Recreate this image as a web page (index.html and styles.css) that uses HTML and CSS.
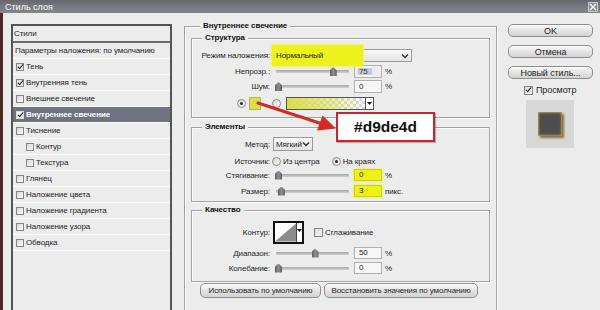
FILE: index.html
```html
<!DOCTYPE html>
<html lang="ru">
<head>
<meta charset="utf-8">
<title>Стиль слоя</title>
<link rel="stylesheet" href="styles.css">
</head>
<body>
<div class="dialog">
  <div class="titlebar">
    <span class="title">Стиль слоя</span>
    <span class="close"><svg width="8" height="8" viewBox="0 0 8 8"><path d="M1 1L7 7M7 1L1 7" stroke="#fff" stroke-width="1.3"/></svg></span>
  </div>
  <div class="content">
    <div class="styles-panel">
      <div class="sp-head">Стили</div>
      <div class="sp-row sp-blend">Параметры наложения: по умолчанию</div>
      <div class="sp-row"><span class="cb on"></span>Тень</div>
      <div class="sp-row"><span class="cb on"></span>Внутренняя тень</div>
      <div class="sp-row"><span class="cb"></span>Внешнее свечение</div>
      <div class="sp-row sel"><span class="cb on"></span>Внутреннее свечение</div>
      <div class="sp-row"><span class="cb"></span>Тиснение</div>
      <div class="sp-row sub"><span class="cb"></span>Контур</div>
      <div class="sp-row sub"><span class="cb"></span>Текстура</div>
      <div class="sp-row"><span class="cb"></span>Глянец</div>
      <div class="sp-row"><span class="cb"></span>Наложение цвета</div>
      <div class="sp-row"><span class="cb"></span>Наложение градиента</div>
      <div class="sp-row"><span class="cb"></span>Наложение узора</div>
      <div class="sp-row"><span class="cb"></span>Обводка</div>
    </div>

    <div class="main">
      <div class="group outer">
        <div class="gtitle outer-title"><span>Внутреннее свечение</span></div>

        <div class="group g-struct">
          <div class="gtitle"><span>Структура</span></div>
          <div class="row r-mode">
            <span class="lbl">Режим наложения:</span>
            <div class="select mode">
              <span class="mark-mode">Нормальный</span>
              <span class="chev"><svg width="8" height="6" viewBox="0 0 8 6"><path d="M1 1.5L4 4.5L7 1.5" fill="none" stroke="#333" stroke-width="1.5"/></svg></span>
            </div>
          </div>
          <div class="row r-13">
            <span class="lbl">Непрозр.:</span>
            <div class="slider"><span class="thumb" style="left:75%"></span></div>
            <span class="num sel-num">75</span><span class="unit">%</span>
          </div>
          <div class="row r-13 mt2">
            <span class="lbl">Шум:</span>
            <div class="slider"><span class="thumb" style="left:0%"></span></div>
            <span class="num">0</span><span class="unit">%</span>
          </div>
          <div class="row r-color">
            <span class="radio on"></span>
            <span class="swatch"></span>
            <span class="radio r2"></span>
            <span class="gradient"><span class="gdrop"><svg width="5" height="3" viewBox="0 0 5 3"><path d="M0 0H5L2.5 3Z" fill="#111"/></svg></span></span>
          </div>
        </div>

        <div class="group g-elem">
          <div class="gtitle"><span>Элементы</span></div>
          <div class="row r-14 mt4">
            <span class="lbl">Метод:</span>
            <div class="select method">
              <span class="sel-text">Мягкий</span>
              <span class="chev"><svg width="8" height="6" viewBox="0 0 8 6"><path d="M1 1.5L4 4.5L7 1.5" fill="none" stroke="#333" stroke-width="1.5"/></svg></span>
            </div>
          </div>
          <div class="row r-14 mt3">
            <span class="lbl">Источник:</span>
            <span class="radio src1"></span><span class="rtext">Из центра</span>
            <span class="radio on src2"></span><span class="rtext">На краях</span>
          </div>
          <div class="row r-12 mt1">
            <span class="lbl">Стягивание:</span>
            <div class="slider"><span class="thumb" style="left:0%"></span></div>
            <span class="num hl">0</span><span class="unit">%</span>
          </div>
          <div class="row r-12 mt4">
            <span class="lbl">Размер:</span>
            <div class="slider"><span class="thumb" style="left:4%"></span></div>
            <span class="num hl">3</span><span class="unit">пикс.</span>
          </div>
        </div>

        <div class="group g-qual">
          <div class="gtitle"><span>Качество</span></div>
          <div class="row r-contour">
            <span class="lbl">Контур:</span>
            <div class="contour">
              <svg class="curve" width="22" height="19" viewBox="0 0 22 19"><rect width="22" height="19" fill="#fff"/><path d="M0 19L22 0V19Z" fill="#8c8c8c"/></svg>
              <span class="cdrop"><svg width="5" height="3" viewBox="0 0 5 3"><path d="M0 0H5L2.5 3Z" fill="#111"/></svg></span>
            </div>
            <span class="cb smooth"></span><span class="rtext">Сглаживание</span>
          </div>
          <div class="row r-12 mt3">
            <span class="lbl">Диапазон:</span>
            <div class="slider"><span class="thumb" style="left:50%"></span></div>
            <span class="num">50</span><span class="unit">%</span>
          </div>
          <div class="row r-12 mt3">
            <span class="lbl">Колебание:</span>
            <div class="slider"><span class="thumb" style="left:0%"></span></div>
            <span class="num">0</span><span class="unit">%</span>
          </div>
        </div>

        <div class="defaults">
          <span class="btn b-use">Использовать по умолчанию</span>
          <span class="btn b-reset">Восстановить значения по умолчанию</span>
        </div>
      </div>
    </div>

    <div class="side">
      <span class="btn sbtn">OK</span>
      <span class="btn sbtn">Отмена</span>
      <span class="btn sbtn">Новый стиль...</span>
      <div class="preview-row"><span class="cb on"></span><span>Просмотр</span></div>
      <div class="preview"><div class="preview-square"></div></div>
    </div>
  </div>

  <svg class="arrow" width="90" height="40" viewBox="250 95 90 40">
    <path d="M258 103L321 123.5" stroke="#d42a22" stroke-width="3" stroke-linecap="round"/>
    <path d="M336 128.5L317 130.5L322.5 115.5Z" fill="#d42a22"/>
  </svg>
  <div class="callout">#d9de4d</div>
</div>
</body>
</html>
```

FILE: styles.css
```css
* { box-sizing: border-box; }

body {
  margin: 0;
  width: 600px;
  height: 310px;
  overflow: hidden;
  background: #ececec;
  font-family: "Liberation Sans", Arial, sans-serif;
  font-size: 8px;
  letter-spacing: -0.1px;
  color: #1e1e1e;
}

.dialog {
  position: relative;
  width: 600px;
  height: 310px;
  display: flex;
  flex-direction: column;
  overflow: hidden;
}

.titlebar {
  height: 13px;
  flex: none;
  display: flex;
  align-items: center;
  justify-content: space-between;
  padding: 0 2px 0 5px;
  background: linear-gradient(#65666e, #7a7b83 60%, #84858c);
  color: #fff;
  font-size: 9px;
  letter-spacing: 0;
}

.close {
  width: 10px;
  height: 10px;
  display: flex;
  align-items: center;
  justify-content: center;
  border: 1px solid #c9c9cc;
  background: #8b8c92;
}

.content {
  flex: 1;
  display: flex;
  align-items: flex-start;
  border-left: 3px solid #4e2a22;
  background: #ececec;
}

/* ---------- left list ---------- */
.styles-panel {
  flex: none;
  width: 161px;
  height: 300px;
  margin: 11px 0 0 8px;
  border: 2px solid #555;
  border-bottom: none;
  background: #ececec;
}

.sp-head {
  height: 17px;
  padding-left: 1px;
  line-height: 15px;
  border-bottom: 2px solid #6d6d6d;
}

.sp-row {
  height: 16px;
  display: flex;
  align-items: center;
  border-bottom: 1px solid #fbfbfb;
  padding-left: 3px;
}

.sp-blend { padding-left: 2px; }

.sp-row.sub { padding-left: 13px; }

.sp-row.sel {
  background: #70737f;
  color: #fff;
  font-weight: bold;
}

.cb {
  position: relative;
  flex: none;
  width: 8px;
  height: 8px;
  margin-right: 2px;
  border: 1px solid #858585;
  background: linear-gradient(135deg, #d8d8d8, #fafafa);
}

.cb.on::after {
  content: "";
  position: absolute;
  left: 2px;
  top: -1px;
  width: 2px;
  height: 5px;
  border: solid #1a1a1a;
  border-width: 0 1.5px 1.5px 0;
  transform: rotate(40deg);
}

.sp-row.sel .cb { border-color: #ddd; background: #f4f4f4; }

/* ---------- main ---------- */
.main {
  flex: none;
  width: 313px;
  margin: 13px 0 0 12px;
}

.group {
  border: 1px solid #a3a3a3;
  box-shadow: inset 1px 1px 0 #fafafa, 1px 1px 0 #fafafa;
}

.outer {
  height: 300px;
  padding: 0 6px;
}

.gtitle {
  height: 12px;
  margin-top: -7px;
  line-height: 12px;
  padding-left: 10px;
  font-weight: bold;
  color: #111;
}

.outer-title { padding-left: 9px; }

.gtitle span {
  padding: 0 3px;
  background: #ececec;
}

.g-struct { margin-top: 6px; padding-bottom: 7px; }
.g-elem { margin-top: 9px; padding-bottom: 4px; }
.g-qual { margin-top: 8px; padding-bottom: 7px; }

.row {
  display: flex;
  align-items: center;
}

.lbl {
  flex: none;
  width: 78px;
  text-align: right;
}

.r-mode { height: 19px; margin-top: 2px; }
.r-13 { height: 13px; }
.r-14 { height: 14px; }
.r-12 { height: 12px; }
.mt1 { margin-top: 1px; }
.mt2 { margin-top: 2px; }
.mt3 { margin-top: 3px; }
.mt4 { margin-top: 4px; }

.select {
  position: relative;
  display: flex;
  align-items: center;
  justify-content: space-between;
  border: 1px solid #9a9a9a;
  background: linear-gradient(#fbfbfb, #e3e3e3);
}

.select.mode {
  width: 140px;
  height: 13px;
  margin-left: 2px;
}

.mark-mode {
  position: relative;
  display: flex;
  align-items: center;
  width: 91px;
  height: 21px;
  margin: 0 0 0 -1px;
  padding-left: 4px;
  background: #eef21c;
  box-shadow: 0 0 2px 1px #f1f36a;
}

.chev {
  display: flex;
  align-items: center;
  justify-content: center;
  width: 11px;
  height: 11px;
  margin-right: 1px;
}

.select.method {
  width: 40px;
  height: 14px;
  margin-left: 3px;
  padding-left: 2px;
}

.slider {
  position: relative;
  flex: none;
  width: 73px;
  height: 9px;
  margin-left: 6px;
}

.slider::before {
  content: "";
  position: absolute;
  left: 0;
  right: 0;
  top: 3px;
  height: 3px;
  background: linear-gradient(#a8a8a8, #cfcfcf);
  border-radius: 1px;
}

.thumb {
  position: absolute;
  top: 0;
  width: 7px;
  height: 9px;
  margin-left: -1px;
  background: linear-gradient(90deg, #5d5d5d, #8f8f8f 50%, #5d5d5d);
  clip-path: polygon(50% 0, 100% 35%, 100% 100%, 0 100%, 0 35%);
}

.num {
  flex: none;
  width: 28px;
  height: 12px;
  margin-left: 5px;
  padding-left: 4px;
  line-height: 10px;
  border: 1px solid #b0b0b0;
  background: #f6f6f6;
}

.r-13 .num { height: 13px; line-height: 11px; }

.sel-num { color: #33405a; background: linear-gradient(#f6f6f6 15%, #c4c9d6 15%, #c4c9d6 85%, #f6f6f6 85%); background-size: 14px 100%; background-repeat: no-repeat; background-position: 3px 0; }

.num.hl {
  background: #eef214;
  border-color: #c9cc3a;
  box-shadow: 0 0 1px 1px #f2f46e;
}

.unit { margin-left: 3px; }

.radio {
  position: relative;
  flex: none;
  width: 9px;
  height: 9px;
  border: 1px solid #8a8a8a;
  border-radius: 50%;
  background: linear-gradient(135deg, #d6d6d6, #fbfbfb);
}

.radio.on::after {
  content: "";
  position: absolute;
  left: 2px;
  top: 2px;
  width: 3px;
  height: 3px;
  border-radius: 50%;
  background: #2a2a2a;
}

.r-color {
  height: 14px;
  margin-top: 3px;
  padding-left: 45px;
}

.swatch {
  flex: none;
  width: 12px;
  height: 13px;
  margin-left: 3px;
  background: #d9de4d;
  border: 1px solid #b6b948;
}

.radio.r2 { margin-left: 11px; }

.gradient {
  flex: none;
  display: flex;
  justify-content: flex-end;
  width: 88px;
  height: 13px;
  margin-left: 5px;
  border: 1px solid #555;
  background:
    linear-gradient(90deg, #d9de4d, rgba(217,222,77,0.55) 55%, rgba(217,222,77,0) 85%),
    repeating-conic-gradient(#ffffff 0 25%, #d8d8d8 0 50%) 0 0 / 6px 6px;
}

.gdrop {
  display: flex;
  align-items: center;
  justify-content: center;
  width: 8px;
  height: 100%;
  border-left: 1px solid #555;
  background: #fff;
}

.src1 { margin-left: 2px; }
.rtext { margin-left: 2px; }
.src2 { margin-left: 12px; }

.r-contour {
  height: 23px;
  margin-top: 5px;
}

.contour {
  flex: none;
  display: flex;
  width: 31px;
  height: 23px;
  margin-left: 3px;
  border: 2px solid #111;
  background: #fff;
}

.curve { display: block; }

.cdrop {
  display: flex;
  align-items: flex-start;
  justify-content: center;
  padding-top: 6px;
  width: 6px;
  border-left: 1px solid #444;
}

.cb.smooth { margin-left: 10px; margin-right: 0; width: 9px; height: 9px; }

.defaults {
  display: flex;
  gap: 3px;
  margin-top: 1px;
  padding-left: 9px;
}

.btn {
  display: flex;
  align-items: center;
  justify-content: center;
  height: 15px;
  border: 1px solid #8e8e8e;
  border-radius: 5px;
  background: linear-gradient(#fafafa, #e4e4e4 50%, #d2d2d2);
  box-shadow: inset 0 1px 0 #fff;
  color: #1e1e1e;
}

.b-use { width: 121px; }
.b-reset { width: 154px; }

/* ---------- right column ---------- */
.side {
  flex: none;
  width: 85px;
  margin: 11px 0 0 11px;
  display: flex;
  flex-direction: column;
  gap: 8px;
}

.sbtn {
  height: 13px;
  font-size: 9px;
}

.preview-row {
  display: flex;
  align-items: center;
  height: 10px;
  margin-top: -2px;
  padding-left: 16px;
  font-size: 9px;
}

.preview-row .cb { width: 9px; height: 9px; margin-right: 3px; }

.preview {
  display: flex;
  align-items: center;
  justify-content: center;
  width: 48px;
  height: 48px;
  margin: -3px 0 0 18px;
  background: #d7d7d7;
}

.preview-square {
  width: 24px;
  height: 24px;
  background: #4e4e4e;
  box-shadow: inset 0 0 2px 1px #b39a55, 2px 2px 2px #8f6f3a;
}

/* ---------- annotation overlay ---------- */
.arrow {
  position: absolute;
  left: 250px;
  top: 95px;
}

.callout {
  position: absolute;
  left: 336px;
  top: 112px;
  width: 99px;
  height: 30px;
  display: flex;
  align-items: center;
  justify-content: center;
  border: 2px solid #c8252d;
  background: #fff;
  box-shadow: 1px 1px 1px rgba(0,0,0,0.25);
  font-size: 15.5px;
  font-weight: bold;
  letter-spacing: 0;
  color: #111;
}
```
